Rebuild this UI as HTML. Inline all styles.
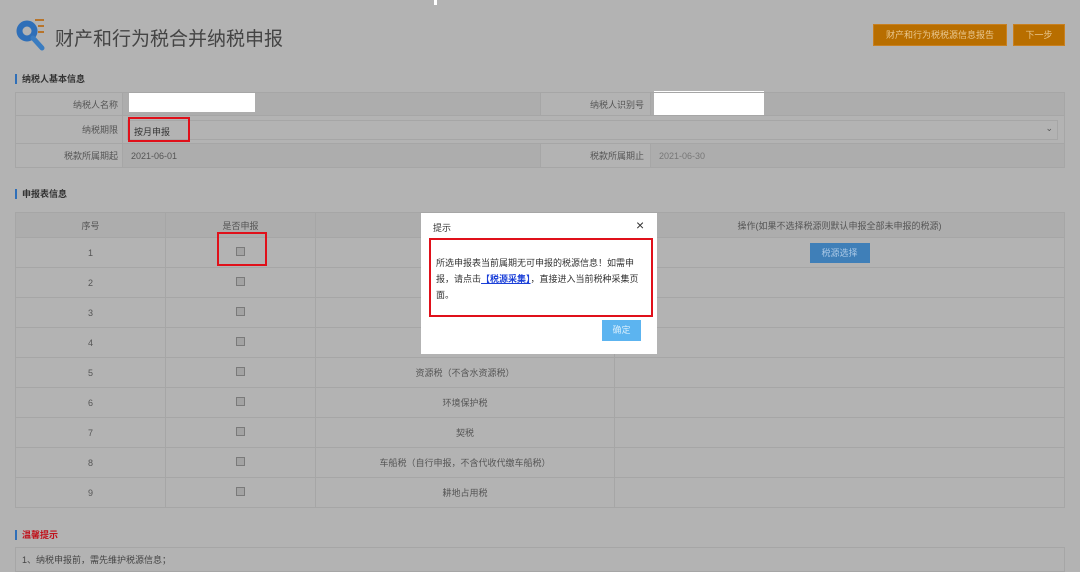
<!DOCTYPE html>
<html><head><meta charset="utf-8"><style>
*{margin:0;padding:0;box-sizing:border-box}
body{width:1080px;height:567px;overflow:hidden;background:#b3b3b3;font-family:"Liberation Sans","Noto Sans CJK SC",sans-serif;font-size:9px;color:#555;position:relative}
.a{position:absolute}
.sec{position:absolute;left:15px;font-size:9px;font-weight:bold;color:#333;border-left:2px solid #2f6fb8;padding-left:5px;line-height:10px}
table{border-collapse:collapse;position:absolute}
td{border:1px solid #a6a6a6;text-align:center;color:#555}
.cb{display:inline-block;width:9px;height:9px;border:1px solid #7a7a7a;background:#a3a3a3}
.btn{position:absolute;background:#b86e00;color:#e9c890;font-size:9px;text-align:center;border:1px solid #c88020}
</style></head><body>
<div class="a" style="left:434px;top:0;width:3px;height:5px;background:#fff"></div>
<svg class="a" style="left:15px;top:17px" width="34" height="36" viewBox="0 0 34 36">
<circle cx="12" cy="14" r="7.5" fill="none" stroke="#2f6fb8" stroke-width="6"/>
<line x1="18" y1="21" x2="27" y2="31" stroke="#3a7cc0" stroke-width="5" stroke-linecap="round"/>
<rect x="20" y="2" width="9" height="2" fill="#b8742a"/><rect x="23" y="8" width="6" height="2" fill="#b8742a"/><rect x="23" y="14" width="6" height="2" fill="#b8742a"/>
</svg>
<div class="a" style="left:55px;top:24px;font-size:19px;color:#444">财产和行为税合并纳税申报</div>
<div class="btn" style="left:873px;top:24px;width:134px;height:22px;line-height:21px">财产和行为税税源信息报告</div>
<div class="btn" style="left:1013px;top:24px;width:52px;height:22px;line-height:21px">下一步</div>

<div class="sec" style="top:74px">纳税人基本信息</div>
<table style="left:15px;top:92px;width:1050px">
<tr style="height:23px;background:#adadad"><td style="width:107px;text-align:right;padding-right:4px;background:#b3b3b3">纳税人名称</td><td style="text-align:left;padding-left:6px;width:418px"><div style="width:126px;height:19px;background:#fff;margin-top:-3px"></div></td><td style="width:110px;text-align:right;padding-right:6px;background:#b3b3b3">纳税人识别号</td><td style="text-align:left;padding-left:3px"><div style="width:110px;height:24px;background:#fff;margin-top:-3px"></div></td></tr>
<tr style="height:28px"><td style="text-align:right;padding-right:4px">纳税期限</td><td colspan="3" style="text-align:left;padding:0 6px 0 4px"><div style="border:1px solid #a6a6a6;height:20px;position:relative"><span style="position:absolute;left:6px;top:4px;color:#333">按月申报</span><span style="position:absolute;right:4px;top:2px;font-size:9px">⌄</span></div></td></tr>
<tr style="height:24px;background:#adadad"><td style="text-align:right;padding-right:4px;background:#b3b3b3">税款所属期起</td><td style="text-align:left;padding-left:8px">2021-06-01</td><td style="text-align:right;padding-right:6px;background:#b3b3b3">税款所属期止</td><td style="text-align:left;padding-left:8px;color:#777">2021-06-30</td></tr>
</table>
<div class="a" style="left:128px;top:117px;width:62px;height:25px;border:2px solid #e0101a"></div>

<div class="sec" style="top:189px">申报表信息</div>
<table style="left:15px;top:212px;width:1050px">
<tr style="height:25px;background:#adadad"><td style="width:150px">序号</td><td style="width:150px">是否申报</td><td style="width:299px"></td><td>操作(如果不选择税源则默认申报全部未申报的税源)</td></tr>
<tr style="height:30px"><td>1</td><td><span class="cb"></span></td><td></td><td><span style="display:inline-block;background:#3f7fb8;color:#aac8e6;width:60px;height:20px;line-height:20px">税源选择</span></td></tr>
<tr style="height:30px"><td>2</td><td><span class="cb"></span></td><td></td><td></td></tr>
<tr style="height:30px"><td>3</td><td><span class="cb"></span></td><td></td><td></td></tr>
<tr style="height:30px"><td>4</td><td><span class="cb"></span></td><td></td><td></td></tr>
<tr style="height:30px"><td>5</td><td><span class="cb"></span></td><td>资源税（不含水资源税）</td><td></td></tr>
<tr style="height:30px"><td>6</td><td><span class="cb"></span></td><td>环境保护税</td><td></td></tr>
<tr style="height:30px"><td>7</td><td><span class="cb"></span></td><td>契税</td><td></td></tr>
<tr style="height:30px"><td>8</td><td><span class="cb"></span></td><td>车船税（自行申报，不含代收代缴车船税）</td><td></td></tr>
<tr style="height:30px"><td>9</td><td><span class="cb"></span></td><td>耕地占用税</td><td></td></tr>
</table>
<div class="a" style="left:217px;top:232px;width:50px;height:34px;border:2px solid #e0101a"></div>

<div class="sec" style="top:530px;color:#c0101a">温馨提示</div>
<div class="a" style="left:15px;top:547px;width:1050px;height:25px;border:1px solid #a6a6a6;padding:5px 6px;color:#444">1、纳税申报前，需先维护税源信息；</div>

<div class="a" style="left:421px;top:213px;width:236px;height:141px;background:#fff">
<div class="a" style="left:12px;top:8px;color:#333">提示</div>
<div class="a" style="left:215px;top:4px;font-size:14px;color:#333">×</div>
<div class="a" style="left:8px;top:25px;width:224px;height:79px;border:2px solid #e0101a;padding:15px 5px 0 5px;line-height:16px;color:#333;font-family:'Noto Sans CJK SC',sans-serif">所选申报表当前属期无可申报的税源信息！如需申报，请点击<span style="color:#1a3fd8;font-weight:bold;text-decoration:underline">【税源采集】</span>，直接进入当前税种采集页面。</div>
<div class="a" style="left:181px;top:107px;width:39px;height:21px;background:#5cb4f0;color:#d8eefc;text-align:center;line-height:21px">确定</div>
</div>
</body></html>
